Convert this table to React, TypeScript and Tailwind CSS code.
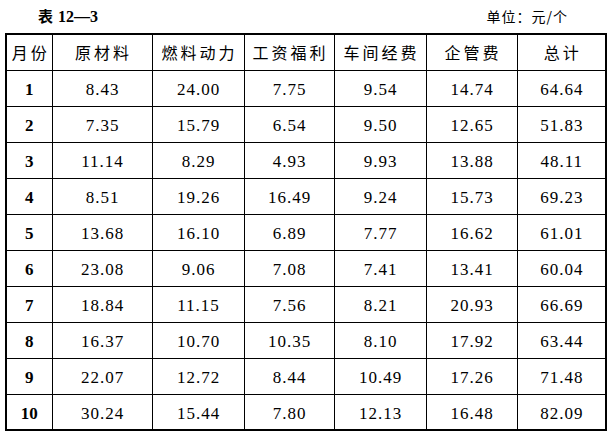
import React from "react";

const rows: string[][] = [
  ["1", "8.43", "24.00", "7.75", "9.54", "14.74", "64.64"],
  ["2", "7.35", "15.79", "6.54", "9.50", "12.65", "51.83"],
  ["3", "11.14", "8.29", "4.93", "9.93", "13.88", "48.11"],
  ["4", "8.51", "19.26", "16.49", "9.24", "15.73", "69.23"],
  ["5", "13.68", "16.10", "6.89", "7.77", "16.62", "61.01"],
  ["6", "23.08", "9.06", "7.08", "7.41", "13.41", "60.04"],
  ["7", "18.84", "11.15", "7.56", "8.21", "20.93", "66.69"],
  ["8", "16.37", "10.70", "10.35", "8.10", "17.92", "63.44"],
  ["9", "22.07", "12.72", "8.44", "10.49", "17.26", "71.48"],
  ["10", "30.24", "15.44", "7.80", "12.13", "16.48", "82.09"],
];

const headers = ["月份", "原材料", "燃料动力", "工资福利", "车间经费", "企管费", "总计"];
const widths = ["w-[46px]", "w-[100px]", "w-[92px]", "w-[90px]", "w-[92px]", "w-[91px]", "w-[89px]"];

const cjk = "font-['Noto_Sans_CJK_SC',sans-serif]";
const serif = "font-['Liberation_Serif','Noto_Sans_CJK_SC',serif]";

export default function App() {
  return (
    <div className="w-[612px] h-[434px] bg-white text-black overflow-hidden">
      <div className="flex h-[33px] items-center justify-between pl-[38px] pr-[44px]">
        <div className="flex items-center gap-[5px] font-bold">
          <span className={`${cjk} text-[15px] font-bold`}>表</span>
          <span className={`${serif} text-[16px] font-bold`}>12—3</span>
        </div>
        <div className={`${cjk} text-[14px] tracking-[1px]`}>单位：元/个</div>
      </div>
      <div className="pl-[5px]">
        <table className="table-fixed border-collapse border-2 border-black w-[600px]">
          <colgroup>
            {widths.map((w, i) => (
              <col key={i} className={w} />
            ))}
          </colgroup>
          <thead>
            <tr className="h-[36px]">
              {headers.map((h, i) => (
                <th
                  key={i}
                  className={`${cjk} border border-black text-[16px] font-normal tracking-[3px] text-center p-0 pl-[3px]`}
                >
                  {h}
                </th>
              ))}
            </tr>
          </thead>
          <tbody>
            {rows.map((r, ri) => (
              <tr key={ri} className="h-[36px]">
                {r.map((c, ci) => (
                  <td
                    key={ci}
                    className={`${serif} border border-black text-center p-0 pt-[3px] ${
                      ci === 0 ? "text-[17px] font-bold" : "text-[17px] tracking-[1px] pl-[1px]"
                    }`}
                  >
                    {c}
                  </td>
                ))}
              </tr>
            ))}
          </tbody>
        </table>
      </div>
    </div>
  );
}
